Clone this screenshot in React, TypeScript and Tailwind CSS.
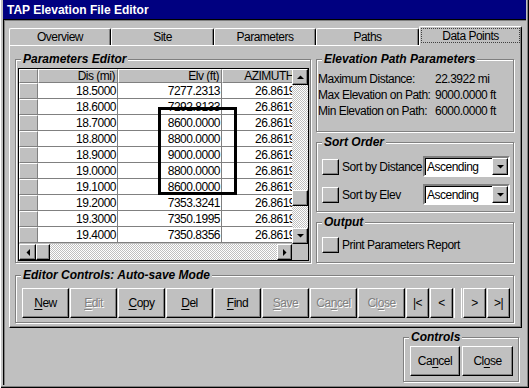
import React from "react";

const raised =
  "border border-t-white border-l-white border-r-black border-b-black shadow-[inset_-1px_-1px_0_#808080]";
const etched = "border border-[#808080] shadow-[inset_1px_1px_0_#fff,1px_1px_0_#fff]";
const checker =
  "bg-[image:repeating-conic-gradient(#c0c0c0_0%_25%,#ffffff_0%_50%)] bg-[length:2px_2px]";

function Tri({ dir }: { dir: "up" | "down" | "left" | "right" }) {
  const pts =
    dir === "up"
      ? "0,4 7,4 3.5,0.5"
      : dir === "down"
      ? "0,0 7,0 3.5,3.5"
      : dir === "left"
      ? "4,0 4,7 0.5,3.5"
      : "0,0 0,7 3.5,3.5";
  const w = dir === "up" || dir === "down" ? 7 : 4;
  const h = dir === "up" || dir === "down" ? 4 : 7;
  return (
    <svg width={w} height={h} viewBox={`0 0 ${w} ${h}`}>
      <polygon points={pts} fill="#000" />
    </svg>
  );
}

function Group({
  label,
  className,
  children,
}: {
  label: string;
  className: string;
  children?: React.ReactNode;
}) {
  return (
    <div className={`relative ${etched} ${className}`}>
      <div className="absolute -top-[7px] left-[5px] px-[2px] bg-[#c0c0c0] font-bold italic text-[12px] leading-[13px] tracking-normal whitespace-nowrap">
        {label}
      </div>
      {children}
    </div>
  );
}

const rows: [string, string][] = [
  ["18.5000", "7277.2313"],
  ["18.6000", "7292.8133"],
  ["18.7000", "8600.0000"],
  ["18.8000", "8800.0000"],
  ["18.9000", "9000.0000"],
  ["19.0000", "8800.0000"],
  ["19.1000", "8600.0000"],
  ["19.2000", "7353.3241"],
  ["19.3000", "7350.1995"],
  ["19.4000", "7350.8356"],
];

const hdrCell =
  "h-[14px] shrink-0 bg-[#c0c0c0] border-t border-l border-t-white border-l-white border-r border-b border-r-[#808080] border-b-[#808080] flex items-center justify-end pr-[2px] leading-none whitespace-nowrap overflow-hidden";
const dataCell =
  "h-[16px] shrink-0 bg-white border-r border-b border-[#808080] flex items-center justify-end pr-[1px] leading-none whitespace-nowrap";
const rowHdr =
  "h-[16px] w-[19px] shrink-0 bg-[#c0c0c0] border-t border-l border-t-white border-l-white border-r border-b border-r-[#808080] border-b-[#808080]";

function DataGrid() {
  return (
    <div className="relative mt-[8px] ml-[2px] w-[291px] h-[193px] border border-black flex flex-col bg-[#c0c0c0]">
      <div className="flex h-[175px]">
        <div className="w-[273px] overflow-hidden">
          <div className="flex">
            <div className={`${hdrCell} w-[19px]`} />
            <div className={`${hdrCell} w-[80px]`}>Dis (mi)</div>
            <div className={`${hdrCell} w-[104px]`}>Elv (ft)</div>
            <div className={`${hdrCell} w-[75px]`}>AZIMUTH</div>
          </div>
          {rows.map(([d, e]) => (
            <div key={d} className="flex">
              <div className={rowHdr} />
              <div className={`${dataCell} w-[80px]`}>{d}</div>
              <div className={`${dataCell} w-[104px]`}>{e}</div>
              <div className={`${dataCell} w-[75px]`}>26.8619</div>
            </div>
          ))}
        </div>
        <div className={`w-[16px] flex flex-col ${checker}`}>
          <div className={`h-[16px] shrink-0 bg-[#c0c0c0] ${raised} flex items-center justify-center`}>
            <Tri dir="up" />
          </div>
          <div className="h-[105px] shrink-0" />
          <div className={`h-[16px] shrink-0 bg-[#c0c0c0] ${raised}`} />
          <div className="flex-1" />
          <div className={`h-[16px] shrink-0 bg-[#c0c0c0] ${raised} flex items-center justify-center`}>
            <Tri dir="down" />
          </div>
        </div>
      </div>
      <div className={`h-[16px] flex ${checker}`}>
        <div className={`w-[17px] shrink-0 bg-[#c0c0c0] ${raised} flex items-center justify-center`}>
          <Tri dir="left" />
        </div>
        <div className={`w-[14px] shrink-0 bg-[#c0c0c0] ${raised}`} />
        <div className="flex-1" />
        <div className={`w-[15px] shrink-0 bg-[#c0c0c0] ${raised} flex items-center justify-center`}>
          <Tri dir="right" />
        </div>
        <div className="w-[16px] shrink-0 bg-[#c0c0c0]" />
      </div>
      <div className="absolute left-[139px] top-[38px] w-[79px] h-[88px] border-[3px] border-black" />
    </div>
  );
}

function SmallBtn() {
  return <div className={`w-[17px] h-[16px] shrink-0 bg-[#c0c0c0] ${raised}`} />;
}

function Dropdown() {
  return (
    <div className="w-[87px] h-[21px] shrink-0 bg-white border-2 border-t-[#808080] border-l-[#808080] border-r-white border-b-white shadow-[inset_1px_1px_0_#000] flex items-center">
      <div className="flex-1 pl-[2px] leading-none">Ascending</div>
      <div className={`w-[16px] h-[17px] bg-[#c0c0c0] ${raised} flex items-center justify-center`}>
        <Tri dir="down" />
      </div>
    </div>
  );
}

function Btn({
  w,
  children,
  disabled,
}: {
  w: string;
  children: React.ReactNode;
  disabled?: boolean;
}) {
  return (
    <div
      className={`${w} h-[30px] shrink-0 bg-[#c0c0c0] ${raised} flex items-center justify-center leading-none ${
        disabled ? "text-[#808080] [text-shadow:1px_1px_0_#fff]" : "text-black"
      }`}
    >
      {children}
    </div>
  );
}

const U = ({ c }: { c: string }) => <span className="underline underline-offset-[2px]">{c}</span>;

export default function App() {
  return (
    <div className="w-[529px] h-[388px] bg-[#c0c0c0] overflow-hidden font-['Liberation_Sans',Arial,sans-serif] text-[12px] tracking-[-0.5px] text-black flex flex-col px-[3px] pb-[3px] shadow-[inset_1px_0_0_#fff,inset_-1px_-1px_0_#000,inset_-2px_-2px_0_#808080]">
      {/* title bar */}
      <div className="h-[19px] shrink-0 bg-[#000080] text-white font-bold text-[12px] tracking-normal pl-[4px] flex items-center">
        TAP Elevation File Editor
      </div>
      {/* client */}
      <div className="flex-1 flex flex-col pl-[5px] pt-[6px] border-l border-t border-black shadow-[inset_1px_1px_0_#808080]">
        {/* tabs */}
        <div className="flex items-end h-[19px] relative z-10">
          {[
            ["Overview", "w-[102px]"],
            ["Site", "w-[103px]"],
            ["Parameters", "w-[102px]"],
            ["Paths", "w-[103px]"],
          ].map(([t, w]) => (
            <div
              key={t}
              className={`${w} h-[17px] border-t border-l border-white border-r border-r-black shadow-[inset_-1px_0_0_#808080] rounded-t-[2px] flex items-center justify-center`}
            >
              {t}
            </div>
          ))}
          <div className="w-[103px] h-[20px] -mb-[1px] bg-[#c0c0c0] border-t border-l border-white border-r border-r-black shadow-[inset_-1px_0_0_#808080] rounded-t-[2px] p-[1px] pb-[3px]">
            <div className="h-full border border-dotted border-[#404040] flex items-center justify-center">
              Data Points
            </div>
          </div>
        </div>
        {/* panel */}
        <div className="w-[513px] h-[283px] shrink-0 border border-t-white border-l-white border-r-black border-b-black shadow-[inset_-1px_-1px_0_#808080] pt-[13px] pl-[5px] flex flex-col">
          <div className="flex gap-[5px]">
            <Group label="Parameters Editor" className="w-[296px] h-[204px]">
              <DataGrid />
            </Group>
            <div className="w-[198px] flex flex-col">
              <Group label="Elevation Path Parameters" className="h-[73px] pt-[11px] pl-[1px]">
                {[
                  ["Maximum Distance:", "22.3922 mi"],
                  ["Max Elevation on Path:", "9000.0000 ft"],
                  ["Min Elevation on Path:", "6000.0000 ft"],
                ].map(([a, b]) => (
                  <div key={a} className="flex h-[16px] items-center whitespace-nowrap">
                    <div className="w-[117px]">{a}</div>
                    <div>{b}</div>
                  </div>
                ))}
              </Group>
              <Group label="Sort Order" className="h-[70px] mt-[10px] pt-[13px] pl-[5px] flex flex-col gap-[7px]">
                {["Sort by Distance", "Sort by Elev"].map((t) => (
                  <div key={t} className="flex items-center h-[21px]">
                    <SmallBtn />
                    <div className="w-[84px] pl-[3px] whitespace-nowrap">{t}</div>
                    <Dropdown />
                  </div>
                ))}
              </Group>
              <Group label="Output" className="h-[41px] mt-[10px] pt-[14px] pl-[5px]">
                <div className="flex items-center h-[16px]">
                  <SmallBtn />
                  <div className="pl-[3px] whitespace-nowrap">Print Parameters Report</div>
                </div>
              </Group>
            </div>
          </div>
          <Group label="Editor Controls: Auto-save Mode" className="w-[499px] h-[48px] mt-[12px] pt-[12px] pl-[6px]">
            <div className="flex gap-[1px]">
              <Btn w="w-[47px]">
                <U c="N" />ew
              </Btn>
              <Btn w="w-[47px]" disabled>
                <U c="E" />dit
              </Btn>
              <Btn w="w-[47px]">
                <U c="C" />opy
              </Btn>
              <Btn w="w-[47px]">
                <U c="D" />el
              </Btn>
              <Btn w="w-[47px]">
                <U c="F" />ind
              </Btn>
              <Btn w="w-[47px]" disabled>
                <U c="S" />ave
              </Btn>
              <Btn w="w-[47px]" disabled>
                Ca<U c="n" />cel
              </Btn>
              <Btn w="w-[47px]" disabled>
                Cl<U c="o" />se
              </Btn>
              <Btn w="w-[23px]">|&lt;</Btn>
              <Btn w="w-[23px]">&lt;</Btn>
              <div className="w-[8px] h-[30px] border-l border-r border-white" />
              <Btn w="w-[23px]">&gt;</Btn>
              <Btn w="w-[23px]">&gt;|</Btn>
            </div>
          </Group>
        </div>
        {/* bottom controls */}
        <div className="w-[513px] flex justify-end">
          <Group label="Controls" className="w-[116px] h-[45px] mt-[9px] mr-[3px] pt-[8px] pl-[6px]">
            <div className="flex gap-[2px]">
              <Btn w="w-[50px]">
                Ca<U c="n" />cel
              </Btn>
              <Btn w="w-[51px]">
                Cl<U c="o" />se
              </Btn>
            </div>
          </Group>
        </div>
      </div>
    </div>
  );
}
